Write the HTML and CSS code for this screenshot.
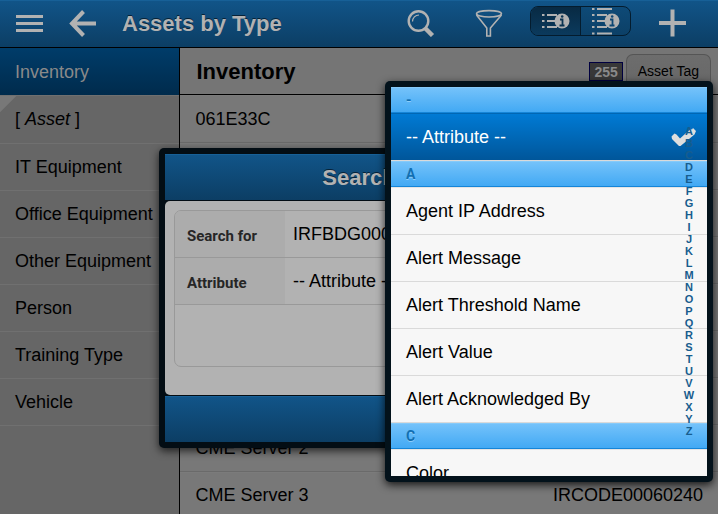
FILE: index.html
```html
<!DOCTYPE html>
<html lang="en">
<head>
<meta charset="utf-8">
<meta name="viewport" content="width=device-width, initial-scale=1">
<title>Assets by Type</title>
<link rel="stylesheet" href="styles.css">
</head>
<body>
<div class="app">
  <header class="topbar">
    <button class="icon-btn" type="button" aria-label="Menu">
      <svg width="28" height="28" viewBox="0 0 28 28"><path d="M0 7.500h27M0 14.500h27M0 21.500h27" stroke="currentColor" stroke-width="3" fill="none"/></svg>
    </button>
    <button class="icon-btn" type="button" aria-label="Back">
      <svg width="28" height="28" viewBox="0 0 28 28"><path d="M3 14.500h24M14.500 2.500L3 14.500l11.500 12" stroke="currentColor" stroke-width="4" fill="none"/></svg>
    </button>
    <h1 class="topbar-title">Assets by Type</h1>
    <div class="tools">
      <button class="icon-btn" type="button" aria-label="Find">
        <svg width="28" height="28" viewBox="0 0 28 28"><circle cx="11.500" cy="12" r="9.800" stroke="currentColor" stroke-width="2.400" fill="none"/><path d="M5.500 12.500a6.500 6.500 0 0 1 6.500-6.500" stroke="currentColor" stroke-width="1.200" fill="none"/><path d="M18.500 19.500l7 7" stroke="currentColor" stroke-width="4.500"/></svg>
      </button>
      <button class="icon-btn" type="button" aria-label="Filter">
        <svg width="28" height="28" viewBox="0 0 28 28" fill="none" stroke="currentColor" stroke-width="1.600"><ellipse cx="14" cy="4.800" rx="12.500" ry="3.200"/><path d="M1.500 6L11.800 19v8h3.600v-8L26.500 6"/></svg>
      </button>
      <div class="toggle">
        <button class="toggle-btn toggle-on" type="button" aria-label="Compact list">
          <svg width="28" height="28" viewBox="0 0 28 28"><path d="M0 8h2.500M0 14h2.500M0 20h2.500M5 8h10M5 14h8M5 20h10" stroke="currentColor" stroke-width="2"/><circle cx="20" cy="14" r="7.500" fill="currentColor"/><path d="M18 12.500h2.500v6M17.500 18.500h5" stroke="#0a3351" stroke-width="1.800" fill="none"/><circle cx="20.200" cy="9.500" r="1.300" fill="#0a3351"/></svg>
        </button>
        <button class="toggle-btn" type="button" aria-label="Detailed list">
          <svg width="28" height="28" viewBox="0 0 28 28"><path d="M0 2h2.500M0 8h2.500M0 14h2.500M0 20h2.500M0 26.500h2.500M5 2h15M5 8h10M5 14h8M5 20h10M5 26.500h15" stroke="currentColor" stroke-width="2"/><circle cx="20" cy="14" r="7.500" fill="currentColor"/><path d="M18 12.500h2.500v6M17.500 18.500h5" stroke="#0d4673" stroke-width="1.800" fill="none"/><circle cx="20.200" cy="9.500" r="1.300" fill="#0d4673"/></svg>
        </button>
      </div>
      <button class="icon-btn" type="button" aria-label="Add">
        <svg width="28" height="28" viewBox="0 0 28 28"><path d="M0 14h27M13.500 0.500v27" stroke="currentColor" stroke-width="4"/></svg>
      </button>
    </div>
  </header>

  <div class="columns">
    <nav class="sidebar">
      <a class="side-item side-current" href="#">Inventory</a>
      <a class="side-item side-corner" href="#">[&nbsp;<i>Asset</i>&nbsp;]</a>
      <a class="side-item" href="#">IT Equipment</a>
      <a class="side-item" href="#">Office Equipment</a>
      <a class="side-item" href="#">Other Equipment</a>
      <a class="side-item" href="#">Person</a>
      <a class="side-item" href="#">Training Type</a>
      <a class="side-item" href="#">Vehicle</a>
    </nav>
    <main class="main">
      <div class="main-head">
        <h2 class="main-title">Inventory</h2>
        <span class="count">255</span>
        <button class="tab" type="button">Asset Tag</button>
      </div>
      <ul class="assets">
        <li class="asset">061E33C</li>
        <li class="asset"></li>
        <li class="asset"></li>
        <li class="asset"></li>
        <li class="asset"></li>
        <li class="asset"></li>
        <li class="asset"></li>
        <li class="asset">CME Server 2</li>
        <li class="asset"><span>CME Server 3</span><span>IRCODE00060240</span></li>
      </ul>
    </main>
  </div>

  <form class="dialog">
    <h2 class="dialog-head">Search</h2>
    <div class="dialog-body">
      <div class="fields">
        <div class="field">
          <label class="field-label" for="term">Search for</label>
          <input class="field-value" id="term" type="text" value="IRFBDG000">
        </div>
        <div class="field">
          <label class="field-label" for="attr">Attribute</label>
          <select class="field-value" id="attr"><option>-- Attribute --</option></select>
        </div>
      </div>
    </div>
    <div class="dialog-foot"></div>
  </form>

  <div class="picker">
    <div class="picker-list">
      <h3 class="group">-</h3>
      <button class="option option-on" type="button">-- Attribute --
        <svg width="26" height="20" viewBox="0 0 26 20"><path d="M0.500 9.500L3.500 6.500l2 1 3.500 4L19.500 2l1.500 0.500L22 1l3 3-1.500 3.500L9.500 19H8L1 12z" fill="#dedede"/></svg>
      </button>
      <h3 class="group">A</h3>
      <button class="option" type="button">Agent IP Address</button>
      <button class="option" type="button">Alert Message</button>
      <button class="option" type="button">Alert Threshold Name</button>
      <button class="option" type="button">Alert Value</button>
      <button class="option" type="button">Alert Acknowledged By</button>
      <h3 class="group">C</h3>
      <button class="option" type="button">Color</button>
    </div>
    <div class="index">
      <span>A</span><span>B</span><span>C</span><span>D</span><span>E</span><span>F</span><span>G</span><span>H</span><span>I</span><span>J</span><span>K</span><span>L</span><span>M</span><span>N</span><span>O</span><span>P</span><span>Q</span><span>R</span><span>S</span><span>T</span><span>U</span><span>V</span><span>W</span><span>X</span><span>Y</span><span>Z</span>
    </div>
  </div>
</div>
</body>
</html>
```
FILE: styles.css
```css
* {
  box-sizing: border-box;
}

body {
  margin: 0;
  font: 18px "Liberation Sans", Arial, sans-serif;
  color: #000;
  background: #787878;
}

h1, h2, h3, ul {
  margin: 0;
  padding: 0;
}

button, input, select {
  margin: 0;
  padding: 0;
  border: 0;
  background: none;
  color: inherit;
  font: inherit;
}

svg {
  display: block;
}

.app {
  position: relative;
  display: flex;
  flex-direction: column;
  height: 100vh;
  overflow: hidden;
}

.topbar {
  display: flex;
  flex: none;
  align-items: center;
  gap: 25px;
  height: 48px;
  padding: 0 31px 2px 16px;
  border-top: 1px solid #176097;
  border-bottom: 1px solid #000;
  background: linear-gradient(#115488, #0c3e64);
  color: #b2b2b2;
}

.topbar-title {
  flex: 1;
  padding-top: 2px;
  font-size: 22px;
  text-shadow: 0 -1px 0 #062238;
}

.tools {
  display: flex;
  align-items: center;
  gap: 27px;
}

.tools > .icon-btn:first-child {
  margin-right: 13px;
}

.toggle {
  display: flex;
  height: 30px;
  margin: 0 1px 4px 0;
  border: 1px solid #041c2e;
  border-radius: 8px;
  overflow: hidden;
  background: linear-gradient(#0e4a77, #0c4067);
}

.toggle-btn {
  display: flex;
  align-items: center;
  justify-content: center;
  width: 49px;
}

.toggle-on {
  width: 50px;
  border-right: 1px solid #041c2e;
  background: linear-gradient(#082a43, #0b3a5d);
}

.columns {
  display: flex;
  flex: 1;
  min-height: 0;
}

.sidebar {
  width: 25%;
  border-right: 1px solid #000;
  background: #666;
}

.side-item {
  display: flex;
  align-items: center;
  height: 47px;
  padding-left: 15px;
  border-bottom: 1px solid #707070;
  color: #000;
  white-space: nowrap;
  text-decoration: none;
}

.side-current {
  border-top: 1px solid #003c68;
  border-bottom: 0;
  background: linear-gradient(#003c69, #002b4c);
  color: #8a8a8a;
}

.side-corner {
  height: 49px;
  border-top: 1px solid #707070;
  background: linear-gradient(135deg, #787878 11px, transparent 12px);
}

.main {
  flex: 1;
  min-width: 0;
}

.main-head {
  display: flex;
  align-items: flex-end;
  height: 47px;
  padding: 0 7px 0 17px;
  border-bottom: 1px solid #000;
  background: #757575;
}

.main-title {
  flex: 1;
  align-self: center;
  padding-top: 2px;
  font-size: 22px;
}

.count {
  height: 19px;
  margin-bottom: 13px;
  padding: 0 4px;
  border: 1px solid #000040;
  background: #383838;
  color: #8a8a8a;
  font-size: 14px;
  font-weight: bold;
  line-height: 18px;
}

.tab {
  height: 40px;
  margin-left: 3px;
  padding: 0 11px 8px;
  border: 1px solid #555;
  border-bottom: 0;
  border-radius: 7px 7px 0 0;
  background: linear-gradient(#6d6d6d, #666);
  font-size: 14px;
}

.assets {
  list-style: none;
}

.asset {
  display: flex;
  align-items: center;
  justify-content: space-between;
  height: 47px;
  padding: 0 15px 0 16px;
  border-top: 1px solid #7b7b7b;
  border-bottom: 1px solid #6a6a6a;
}

.asset:first-child {
  height: 48px;
}

.dialog {
  position: absolute;
  top: 148px;
  left: 50%;
  width: 400px;
  margin-left: -200px;
  padding: 6px;
  border-radius: 5px;
  background: #030d14;
  box-shadow: 0 3px 8px rgba(0, 0, 0, 0.7);
}

.dialog-head {
  height: 46px;
  border-top: 1px solid #176097;
  background: linear-gradient(#115488, #0c3e64);
  color: #b2b2b2;
  font-size: 22px;
  line-height: 46px;
  text-align: center;
  text-shadow: 0 -1px 0 #062238;
}

.dialog-body {
  margin: 1px 0;
  padding: 9px;
  border-radius: 5px;
  background: #b2b2b2;
}

.fields {
  height: 157px;
  margin-bottom: 19px;
  border: 1px solid #999;
  border-radius: 7px;
  overflow: hidden;
}

.field {
  display: flex;
  height: 47px;
  border-bottom: 1px solid #999;
}

.field-label {
  width: 110px;
  padding: 3px 0 0 12px;
  background: #acacac;
  color: #262626;
  font: bold 15px/44px Roboto, sans-serif;
}

.field-value {
  flex: 1;
  min-width: 0;
  padding-left: 8px;
  appearance: none;
}

.dialog-foot {
  height: 46px;
  border-top: 1px solid #176097;
  background: linear-gradient(#115488, #0c3e64);
}

.picker {
  position: absolute;
  top: 81px;
  right: 5px;
  width: 328px;
  padding: 6px;
  border-radius: 5px;
  background: #03121b;
  box-shadow: 0 3px 8px rgba(0, 0, 0, 0.8);
}

.picker-list {
  height: 389px;
  overflow: hidden;
  background: #f7f7f7;
}

.group {
  height: 26px;
  padding-left: 15px;
  border-top: 1px solid #86caf9;
  border-bottom: 1px solid #1585d8;
  background: linear-gradient(#74c2fa, #42a9f4);
  color: #116fb2;
  font: bold 14px/25px Roboto, sans-serif;
  text-shadow: 0 1px 0 #8ccdfb;
}

.option {
  display: flex;
  align-items: center;
  justify-content: space-between;
  width: 100%;
  height: 47px;
  padding: 0 10px 0 15px;
  border-bottom: 1px solid #dadada;
  text-align: left;
}

.group + .option {
  height: 48px;
  border-top: 1px solid #e4e4e4;
}

.group + .option-on {
  border-top-color: #0067b4;
  background: linear-gradient(#007ad4, #00569a);
  color: #fff;
}

.index {
  position: absolute;
  top: 44px;
  right: 18px;
  display: flex;
  flex-direction: column;
  width: 12px;
  color: #175d8e;
  font: bold 11px/12px "Liberation Sans", Arial, sans-serif;
  text-align: center;
}
```
